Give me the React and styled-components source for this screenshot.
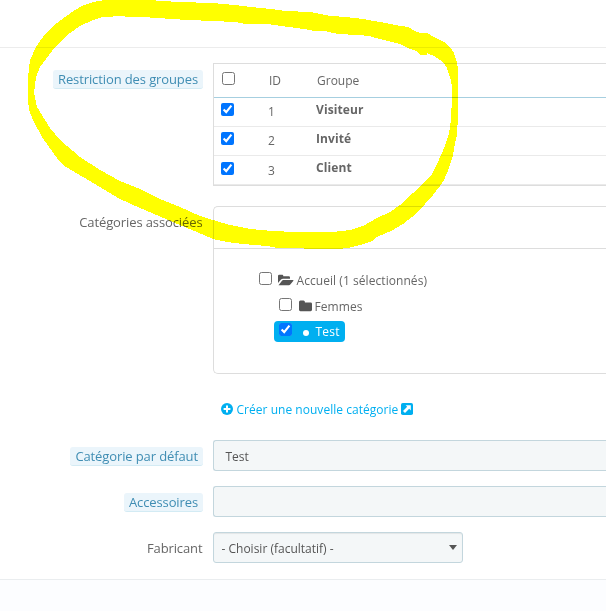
import React from "react";
import styled, { createGlobalStyle, css } from "styled-components";

const GlobalStyle = createGlobalStyle`
  * { box-sizing: border-box; }
  html, body { margin: 0; overflow: hidden; background: #fff; }
  body { font-family: "Open Sans", "Noto Sans", sans-serif; font-size: 12px; color: #666; }
`;

const Page = styled.div`
  position: relative;
  width: 606px;
  height: 611px;
  overflow: hidden;
  display: flex;
  flex-direction: column;
`;

const TopBar = styled.header`
  height: 48px;
  flex: none;
  border-bottom: 1px solid #ececec;
`;

const Form = styled.main`
  height: 531px;
  flex: none;
  padding-top: 15px;
`;

const Footer = styled.footer`
  flex: 1;
  background: #fcfdff;
  border-top: 1px solid #eaedef;
`;

const FormGroup = styled.div`
  display: grid;
  grid-template-columns: 203px 403px;
  column-gap: 10px;
  height: ${(p) => p.$height}px;
`;

const LabelCell = styled.div`
  display: flex;
  justify-content: flex-end;
  align-items: flex-start;
  padding-top: ${(p) => p.$top}px;
  font-size: 13px;
  line-height: 18px;
  letter-spacing: -0.11px;
  white-space: nowrap;
`;

const LabelText = styled.label`
  height: 19px;
  padding-right: 0.5px;
  ${(p) =>
    p.$hint &&
    css`
      padding: 0 5px;
      color: #3f8db3;
      background: #ebf5fb;
      border-bottom: 1px solid #d3ebf4;
      border-radius: 3px;
    `}
`;

const Checkbox = styled.input.attrs({ type: "checkbox" })`
  width: 13px;
  height: 13px;
  margin: 0;
  flex: none;
`;

const GroupTable = styled.div`
  height: 123px;
  border: 1px solid #ddd;
  border-right: 0;
`;

const GroupRow = styled.div`
  display: grid;
  grid-template-columns: 47px 48px 1fr;
  height: ${(p) => p.$height}px;
  padding-left: ${(p) => (p.$head ? 8 : 7)}px;
  line-height: 17px;
  border-bottom: 1px solid ${(p) => (p.$head ? "#a6cfe0" : "#eaeaea")};
`;

const Cell = styled.div`
  display: flex;
  align-items: flex-start;
  padding-top: ${(p) => p.$top}px;
  font-weight: ${(p) => (p.$bold ? 700 : 400)};
  letter-spacing: ${(p) => (p.$bold ? 0.1 : 0)}px;
`;

const TreePanel = styled.section`
  height: 168px;
  border: 1px solid #ddd;
  border-right: 0;
  border-radius: 5px 0 0 5px;
`;

const TreeHeader = styled.div`
  height: 42px;
  border-bottom: 1px solid #ddd;
`;

const TreeList = styled.ul`
  list-style: none;
  margin: 0;
  padding: 18px 0 0 40px;
`;

const TreeItem = styled.li`
  display: flex;
  width: max-content;
  height: ${(p) => (p.$selected ? 21 : 26)}px;
  margin-left: ${(p) => (p.$level ? 20 : 0)}px;
  padding: 5px 5px 0;
  line-height: 17px;
  letter-spacing: 0.06px;
  ${(p) =>
    p.$selected &&
    css`
      margin-top: 2px;
      padding-top: 2px;
      background: #00aff0;
      color: #fff;
      border-radius: 4px;
      letter-spacing: 0.2px;
    `}
`;

const TreeIcon = styled.span`
  display: flex;
  width: ${(p) => p.$width}px;
  padding: ${(p) => p.$top}px 0 0 ${(p) => p.$left}px;
`;

const CreateLink = styled.a`
  display: flex;
  align-items: flex-start;
  height: 20px;
  margin: 27px 0 0 8px;
  color: #00aff0;
  line-height: 17px;
  letter-spacing: 0.03px;
  white-space: nowrap;
  svg { margin-top: 2px; flex: none; }
  span { margin: 0 3px 0 3.5px; }
`;

const Field = styled.div`
  display: flex;
  justify-content: space-between;
  width: ${(p) => p.$width};
  height: 31px;
  padding: 7px ${(p) => p.$right || 0}px 0 ${(p) => p.$left || 0}px;
  line-height: 17px;
  color: #555;
  background: #f4f7f8;
  border: 1px solid #c3d6dd;
  border-right-width: ${(p) => (p.$open ? 0 : 1)}px;
  border-radius: ${(p) => (p.$open ? "3px 0 0 3px" : "3px")};
  box-shadow: ${(p) => (p.$open ? "none" : "inset 0 1px 1px rgba(0,0,0,.07)")};
`;

const Caret = styled.span`
  width: 0;
  height: 0;
  margin-top: 5px;
  border: solid transparent;
  border-width: 5px 4.5px 0;
  border-top-color: #555;
`;

const Marker = styled.svg`
  position: absolute;
  top: 0;
  left: 0;
  mix-blend-mode: multiply;
  pointer-events: none;
`;

const OUTER =
  "M105 0L150 0L162 1L180 2L212 3L235 5L251 7L271 9L285 11L310 12L320 14L331 16L346 17L363 19L374 21L386 23L395 25L408 27L415 31L420 33L427 33L434 37L444 42L451 48L454 53L457 62L458 69L458 115L457 135L455 143L453 155L449 168L444 180L440 186L433 195L417 213L403 224L393 230L377 237L372 241L360 245L350 247.5L340 249L306 249L302 248L275 247.5L267 246L243 244L227 242L213 239L197 232L180 225L160 216.5L140 208L120 199L100 187L83 177L63 165L57 158L42 137L33 120L29 110L28 100L28 77L30 60L36 47L45 34L57 23L72 12L82 6L93 2Z";
const INNER =
  "M103 17L93 20L80 26L70 33L55 47L40 67L36 77L34 93L37 107L50 128L60 140L80 157L100 170L120 181L140 189L160 199L180 207L200 216L213 220L230 225L250 229L273 231L295 232L337 231.5L350 230L363 226L377 218L390 212L400 205L413 193L427 180L432 174L437 164L441 155L445 146L449 134L451 119L452 98L452 86L450 77L447 68L443 62L434 56L427 53L427 55L420 55L417 51L410 49L400 44L392 42L380 39L369 36L358 35L338 34L325 31L315 31L304 29L289 27L267 24L245 24L236 22L212 21L180 19.5L150 17.5L127 17L122 16Z";

const FolderOpen = () => (
  <svg width="16" height="12" viewBox="0 0 16 12" fill="#555">
    <path d="M0 9V2Q0 .7 1.2.7H4.2Q5.3.7 5.3 2V2.3H10.8Q12 2.3 12 3.5V4.7H5Q3.8 4.7 3 5.6Z" />
    <path d="M.5 11.3L4 6.7Q4.5 6 5.4 6H15Q16 6 15.2 7L12.3 10.6Q11.8 11.3 10.9 11.3Z" />
  </svg>
);

const Folder = () => (
  <svg width="13" height="12" viewBox="0 0 13 12" fill="#555">
    <path d="M0 2Q0 .5 1.4.5H4.5Q5.9.5 5.9 2V2.4H11.6Q13 2.4 13 3.8V9.8Q13 11.2 11.6 11.2H1.4Q0 11.2 0 9.8Z" />
  </svg>
);

const Dot = () => (
  <svg width="6" height="6" viewBox="0 0 6 6" fill="#fff">
    <circle cx="3" cy="3" r="3" />
  </svg>
);

const PlusCircle = () => (
  <svg width="12" height="12" viewBox="0 0 12 12">
    <circle cx="6" cy="6" r="6" fill="#00aff0" />
    <path d="M6 2.6V9.4M2.6 6H9.4" stroke="#fff" strokeWidth="2" />
  </svg>
);

const ExternalSquare = () => (
  <svg width="12" height="12" viewBox="0 0 12 12">
    <rect width="12" height="12" rx="1.8" fill="#00aff0" />
    <path d="M4.6 2.2H9.8V7.4L8.2 5.8L4 10L2 8L6.2 3.8Z" fill="#fff" />
  </svg>
);

const GROUPS = [
  { id: 1, name: "Visiteur", height: 29, box: 5 },
  { id: 2, name: "Invité", height: 29, box: 5 },
  { id: 3, name: "Client", height: 29, box: 6 },
];

export default function App() {
  return (
    <>
      <GlobalStyle />
      <Page>
        <TopBar />
        <Form>
          <FormGroup $height={143}>
            <LabelCell $top={7}>
              <LabelText $hint>Restriction des groupes</LabelText>
            </LabelCell>
            <GroupTable>
              <GroupRow $head $height={34}>
                <Cell $top={8}><Checkbox /></Cell>
                <Cell $top={8}>ID</Cell>
                <Cell $top={8}>Groupe</Cell>
              </GroupRow>
              {GROUPS.map((g) => (
                <GroupRow key={g.id} $height={g.height}>
                  <Cell $top={g.box}><Checkbox defaultChecked /></Cell>
                  <Cell $top={g.box}>{g.id}</Cell>
                  <Cell $top={3} $bold>{g.name}</Cell>
                </GroupRow>
              ))}
            </GroupTable>
          </FormGroup>

          <FormGroup $height={234}>
            <LabelCell $top={7}>
              <LabelText>Catégories associées</LabelText>
            </LabelCell>
            <div>
              <TreePanel>
                <TreeHeader />
                <TreeList>
                  <TreeItem>
                    <Checkbox />
                    <TreeIcon $width={24.5} $top={2} $left={6}><FolderOpen /></TreeIcon>
                    Accueil (1 sélectionnés)
                  </TreeItem>
                  <TreeItem $level={1}>
                    <Checkbox />
                    <TreeIcon $width={22.5} $top={2} $left={6.5}><Folder /></TreeIcon>
                    Femmes
                  </TreeItem>
                  <TreeItem $level={1} $selected>
                    <Checkbox defaultChecked />
                    <TreeIcon $width={23.5} $top={7} $left={11}><Dot /></TreeIcon>
                    Test
                  </TreeItem>
                </TreeList>
              </TreePanel>
              <CreateLink>
                <PlusCircle />
                <span>Créer une nouvelle catégorie</span>
                <ExternalSquare />
              </CreateLink>
            </div>
          </FormGroup>

          <FormGroup $height={46}>
            <LabelCell $top={7}>
              <LabelText $hint>Catégorie par défaut</LabelText>
            </LabelCell>
            <Field $open $width="393px" $left={11.5}>Test</Field>
          </FormGroup>
          <FormGroup $height={46}>
            <LabelCell $top={7}>
              <LabelText $hint>Accessoires</LabelText>
            </LabelCell>
            <Field $open $width="393px" />
          </FormGroup>
          <FormGroup $height={46}>
            <LabelCell $top={7}>
              <LabelText>Fabricant</LabelText>
            </LabelCell>
            <Field $width="250px" $left={7.5} $right={5}>
              - Choisir (facultatif) -
              <Caret />
            </Field>
          </FormGroup>
        </Form>
        <Footer />
        <Marker width="606" height="611" viewBox="0 0 606 611">
          <path d={OUTER + INNER} fill="#ff0" fillRule="evenodd" shapeRendering="crispEdges" />
        </Marker>
      </Page>
    </>
  );
}
